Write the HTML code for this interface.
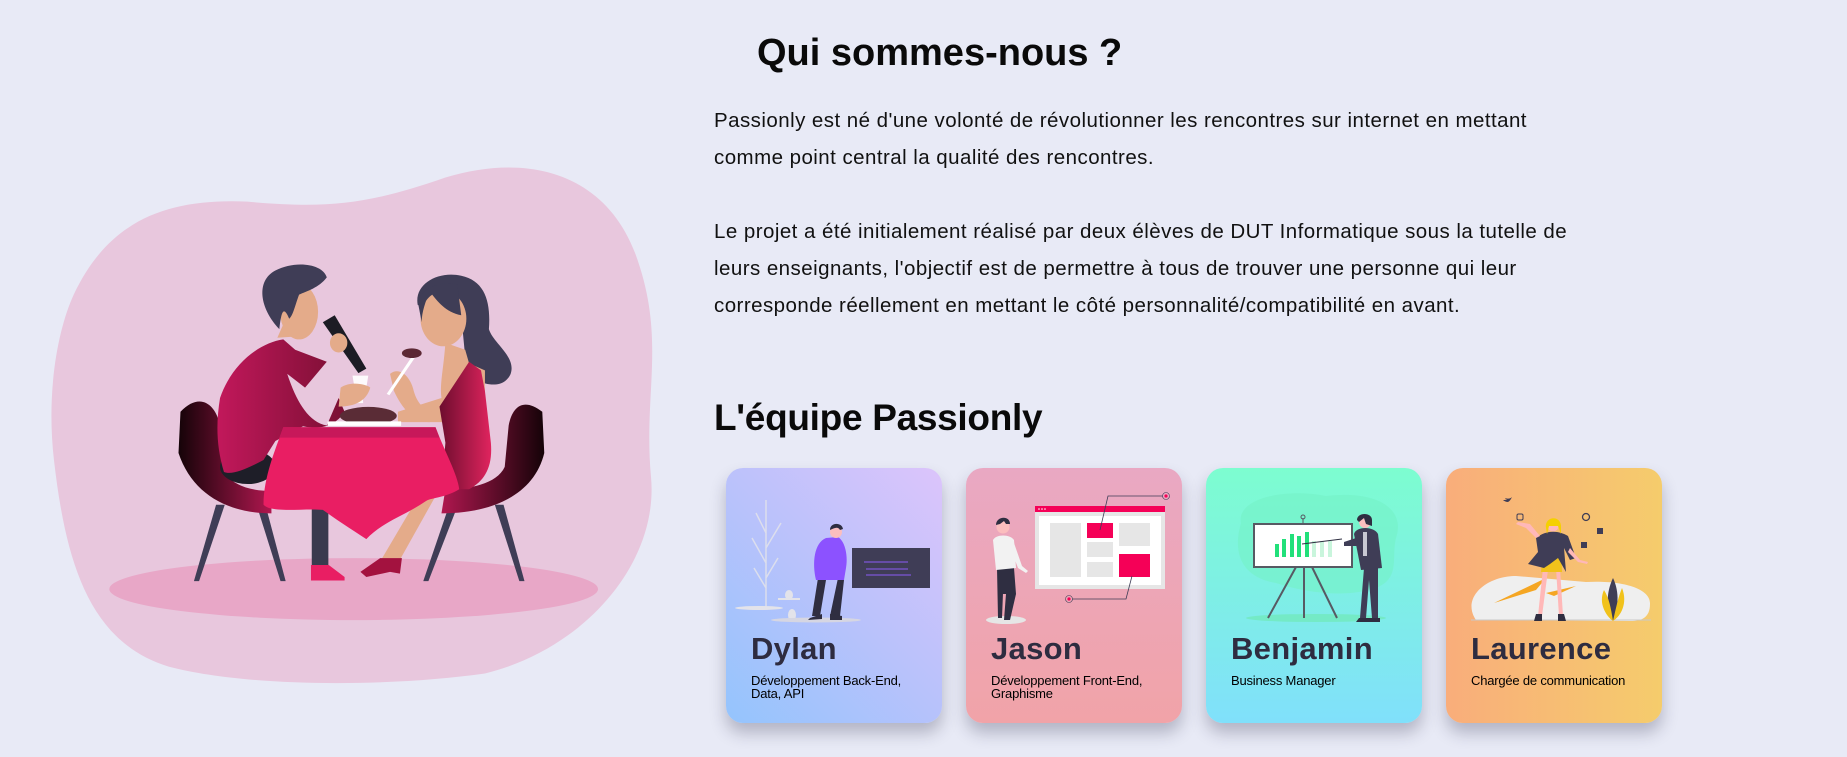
<!DOCTYPE html>
<html><head><meta charset="utf-8">
<style>
*{margin:0;padding:0;box-sizing:border-box}
html,body{width:1847px;height:757px;overflow:hidden;background:#e8eaf6;font-family:"Liberation Sans",sans-serif;position:relative}
.abs{position:absolute}
h1{position:absolute;left:757px;top:32px;font-size:38px;font-weight:bold;color:#0a0a0a;letter-spacing:0px;white-space:nowrap}
h2{position:absolute;left:714px;top:397px;font-size:37px;font-weight:bold;color:#0a0a0a;letter-spacing:-0.3px;white-space:nowrap}
.p{position:absolute;left:714px;font-size:20.5px;color:#111;line-height:37px;white-space:nowrap;letter-spacing:0.45px}
.card{position:absolute;top:468px;width:216px;height:255px;border-radius:17px;box-shadow:0 10px 16px rgba(40,40,70,.28);overflow:hidden}
.card svg{position:absolute;left:0;top:0}
.name{position:absolute;left:25px;top:163px;font-size:31px;font-weight:bold;color:#2e2c40;letter-spacing:0.3px}
.role{position:absolute;left:25px;top:206px;font-size:13px;line-height:13px;color:#000;letter-spacing:-0.2px}
</style></head><body>

<svg class="abs" style="left:50px;top:150px" width="620" height="540" viewBox="0 0 1568 1568" preserveAspectRatio="none">
<defs>
<linearGradient id="ch" x1="0" x2="1"><stop offset="0" stop-color="#150308"/><stop offset="1" stop-color="#b0174f"/></linearGradient>
<linearGradient id="ch2" x1="1" x2="0"><stop offset="0" stop-color="#150308"/><stop offset="1" stop-color="#b0174f"/></linearGradient>
<linearGradient id="sh" x1="0" x2="1"><stop offset="0" stop-color="#c2185b"/><stop offset="1" stop-color="#7a0f33"/></linearGradient>
<linearGradient id="dr" x1="0" x2="1"><stop offset="0" stop-color="#6d0d2e"/><stop offset="1" stop-color="#e0245e"/></linearGradient>
</defs>
<path d="M60 420 C150 200 300 140 500 150 C700 170 800 160 1000 80 C1200 10 1400 60 1480 300 C1560 550 1500 700 1520 950 C1540 1200 1350 1450 1100 1520 C850 1560 500 1560 300 1500 C100 1430 40 1200 10 900 C-10 700 20 520 60 420Z" fill="#e8c7dd"/>
<ellipse cx="768" cy="1275" rx="618" ry="90" fill="#e8a7c7"/>
<polygon points="420,1030 442,1030 377,1252 364,1252" fill="#3f3d56"/>
<polygon points="525,1040 547,1040 596,1252 583,1252" fill="#3f3d56"/>
<polygon points="1010,1030 1032,1030 957,1252 944,1252" fill="#3f3d56"/>
<polygon points="1125,1030 1147,1030 1200,1252 1187,1252" fill="#3f3d56"/>
<path d="M330 760 C380 700 420 740 430 800 L440 930 C460 980 520 990 560 990 L560 1055 C450 1055 360 1000 325 880 Z" fill="url(#ch)"/>
<path d="M1245 760 C1200 720 1170 740 1160 800 L1150 920 C1130 970 1060 985 1000 985 L990 1055 C1120 1055 1225 1000 1250 880 Z" fill="url(#ch2)"/>
<rect x="662" y="1030" width="42" height="180" fill="#3a3a4e"/>
<path d="M660 1205 L705 1205 L745 1240 L745 1250 L660 1250Z" fill="#e91e63"/>
<path d="M975 1005 L880 1200 L835 1195 L935 1000Z" fill="#e4ab8a"/>
<path d="M835 1185 L890 1185 L885 1230 L860 1225 L800 1240 L785 1225Z" fill="#a3123f"/>
<ellipse cx="500" cy="920" rx="70" ry="50" fill="#1e1e28"/>
<path d="M430 720 C460 620 530 560 590 550 L620 580 L700 615 L645 690 L600 650 C620 720 650 790 700 800 L730 720 L745 760 C720 805 680 812 640 802 L570 845 L540 900 C500 925 460 945 440 935 C420 860 420 790 430 720Z" fill="url(#sh)"/>
<path d="M575 545 L600 480 L640 540 Z" fill="#e4ab8a"/>
<ellipse cx="630" cy="470" rx="48" ry="80" fill="#e4ab8a"/>
<path d="M580 520 C530 460 520 380 570 350 C620 320 690 330 700 370 C680 400 650 410 630 420 C620 450 615 480 605 490 C590 450 585 470 580 520Z" fill="#3f3d56"/>
<path d="M690 500 L720 480 L800 635 L780 648Z" fill="#1c1c24"/>
<ellipse cx="730" cy="560" rx="22" ry="28" fill="#e4ab8a"/>
<path d="M765 655 L805 655 L800 690 L790 690 L792 735 L775 735 L780 690 L770 690Z" fill="#fff" opacity=".9"/>
<path d="M735 690 C760 670 800 680 810 690 C800 730 770 745 730 745Z" fill="#e4ab8a"/>
<path d="M930 450 C920 390 980 350 1040 365 C1100 380 1115 440 1110 520 C1120 560 1180 600 1165 650 C1150 690 1110 685 1080 670 L1050 600 L1040 480 Z" fill="#3f3d56"/>
<ellipse cx="995" cy="490" rx="58" ry="80" fill="#e4ab8a"/>
<path d="M930 440 C940 400 990 380 1030 390 L1040 480 C1000 470 980 440 960 410 C950 440 940 470 940 500Z" fill="#3f3d56"/>
<path d="M1000 560 L1050 580 L1060 620 L1100 640 L1100 700 L1010 790 L880 790 L880 760 L990 720 C985 680 995 640 1000 560Z" fill="#e4ab8a"/>
<path d="M860 650 C880 630 910 650 920 700 C930 740 950 760 980 760 L960 790 C920 790 890 750 870 700Z" fill="#e4ab8a"/>
<path d="M1060 615 L1090 640 L1100 700 L1115 850 C1120 920 1100 960 1060 985 L990 985 L1000 850 L985 745 Z" fill="url(#dr)"/>
<path d="M920 600 L855 710" stroke="#fff" stroke-width="8"/>
<ellipse cx="915" cy="590" rx="25" ry="14" fill="#5c2834"/>
<ellipse cx="805" cy="772" rx="72" ry="26" fill="#5a2c36"/>
<rect x="702" y="788" width="186" height="13" fill="#fff"/>
<path d="M590 805 L975 805 C1000 880 1030 940 1035 985 C1000 1010 960 1010 950 1020 C900 1060 840 1080 800 1130 C760 1100 720 1070 690 1045 C640 1040 560 1055 540 1030 C540 950 570 870 590 805Z" fill="#e91e63"/>
<path d="M590 805 L975 805 L985 835 L580 835Z" fill="#c7185a"/>
</svg>

<h1>Qui sommes-nous ?</h1>
<div class="p" style="top:102px">Passionly est né d'une volonté de révolutionner les rencontres sur internet en mettant<br>comme point central la qualité des rencontres.</div>
<div class="p" style="top:213px">Le projet a été initialement réalisé par deux élèves de DUT Informatique sous la tutelle de<br>leurs enseignants, l'objectif est de permettre à tous de trouver une personne qui leur<br>corresponde réellement en mettant le côté personnalité/compatibilité en avant.</div>
<h2>L'équipe Passionly</h2>

<div class="card" style="left:726px;background:linear-gradient(45deg,#94c4fd 0%,#b9c2fb 50%,#dcc4fb 100%)">
<svg width="216" height="255">
<g stroke="#e3e3ea" stroke-width="1.5" fill="none" opacity=".85"><path d="M40 32 L40 140 M40 95 L26 70 M40 80 L55 55 M40 110 L52 90 M40 65 L30 45 M40 120 L28 100"/></g>
<ellipse cx="33" cy="140" rx="24" ry="2" fill="#e3e3ea"/>
<rect x="52" y="130" width="22" height="2" fill="#e3e3ea"/><ellipse cx="63" cy="127" rx="4" ry="5" fill="#e3e3ea"/>
<ellipse cx="66" cy="147" rx="4" ry="6" fill="#e3e3ea"/>
<ellipse cx="90" cy="152" rx="45" ry="2.5" fill="#d6d6e2"/>
<rect x="126" y="80" width="78" height="40" fill="#3f3d56"/>
<g stroke="#8b5cf6" stroke-width="1"><path d="M138 94 L182 94 M140 101 L182 101 M140 107 L185 107"/></g>
<path d="M104 148 L112 110 L118 112 L114 148Z M86 148 L92 110 L100 112 L94 148Z" fill="#2f2e41"/>
<path d="M84 150 L96 146 L96 151 L82 152Z M104 146 L116 148 L116 152 L104 152Z" fill="#2f2e41"/>
<path d="M90 112 C86 95 88 75 100 70 L112 69 C120 74 122 90 120 100 L118 112Z" fill="#8c52ff"/>
<circle cx="110" cy="64" r="6" fill="#fbbebe"/>
<path d="M104 62 C104 54 116 54 117 61 L114 62 C112 58 108 60 104 62Z" fill="#2f2e41"/>
</svg>
<div class="name">Dylan</div>
<div class="role">Développement Back-End,<br>Data, API</div>
</div>

<div class="card" style="left:966px;background:linear-gradient(180deg,#e9a8c3 0%,#f1a3a8 100%)">
<svg width="216" height="255">
<rect x="69" y="38" width="130" height="83" fill="#e6e6e6"/>
<rect x="69" y="38" width="130" height="6" fill="#f50057"/>
<circle cx="73" cy="41" r=".8" fill="#fff"/><circle cx="76" cy="41" r=".8" fill="#fff"/><circle cx="79" cy="41" r=".8" fill="#fff"/>
<rect x="73" y="48" width="122" height="69" fill="#fff"/>
<rect x="84" y="55" width="31" height="54" fill="#e6e6e6"/>
<rect x="121" y="55" width="26" height="15" fill="#f50057"/>
<rect x="121" y="74" width="26" height="15" fill="#e6e6e6"/>
<rect x="121" y="94" width="26" height="15" fill="#e6e6e6"/>
<rect x="153" y="55" width="31" height="23" fill="#e6e6e6"/>
<rect x="153" y="86" width="31" height="23" fill="#f50057"/>
<path d="M134 62 L142 28 L197 28 M166 108 L160 131 L106 131" stroke="#3f3d56" stroke-width=".8" fill="none"/>
<circle cx="200" cy="28" r="3.5" fill="none" stroke="#3f3d56" stroke-width=".6"/><circle cx="200" cy="28" r="1.6" fill="#f50057"/>
<circle cx="103" cy="131" r="3.5" fill="none" stroke="#3f3d56" stroke-width=".6"/><circle cx="103" cy="131" r="1.6" fill="#f50057"/>
<ellipse cx="40" cy="152" rx="20" ry="4" fill="#e6e6e6"/>
<path d="M34 100 L48 100 L50 126 L44 152 L38 152 L40 126 L34 126Z M31 100 L38 100 L36 150 L32 150Z" fill="#2f2e41"/>
<path d="M27 72 C30 66 44 66 48 72 L50 100 L30 102 Z" fill="#f2f2f2"/>
<path d="M48 75 L56 98 L62 103 L60 105 L52 100 L46 84Z" fill="#f2f2f2"/>
<circle cx="37" cy="59" r="6.5" fill="#fbbebe"/>
<path d="M30 57 C30 48 44 47 44 56 L40 56 L38 53 L34 56Z" fill="#2f2e41"/>
</svg>
<div class="name">Jason</div>
<div class="role">Développement Front-End,<br>Graphisme</div>
</div>

<div class="card" style="left:1206px;background:linear-gradient(180deg,#7dfdd0 0%,#80e0fb 100%)">
<svg width="216" height="255">
<path d="M35 55 C30 30 80 20 120 28 C170 22 200 40 190 70 C185 90 195 110 170 120 C140 130 100 125 70 115 C40 110 25 90 35 55Z" fill="#74f2c6" opacity=".6"/>
<ellipse cx="110" cy="150" rx="70" ry="4" fill="#74eac6"/>
<path d="M90 99 L62 150 M98 99 L98 150 M106 99 L131 150" stroke="#575a63" stroke-width="2"/>
<path d="M97 55 L97 50" stroke="#575a63" stroke-width="1"/><circle cx="97" cy="49" r="2" fill="none" stroke="#575a63" stroke-width="1"/>
<rect x="48" y="56" width="98" height="43" fill="#fff" stroke="#575a63" stroke-width="2"/>
<rect x="69" y="76" width="4" height="13" fill="#22e07a"/>
<rect x="76" y="71" width="4" height="18" fill="#22e07a"/>
<rect x="84" y="66" width="4" height="23" fill="#22e07a"/>
<rect x="91" y="68" width="4" height="21" fill="#22e07a"/>
<rect x="99" y="64" width="4" height="25" fill="#22e07a"/>
<rect x="106" y="73" width="4" height="16" fill="#c9f5dc"/><rect x="114" y="73" width="4" height="16" fill="#c9f5dc"/><rect x="122" y="73" width="4" height="16" fill="#c9f5dc"/>
<path d="M96 76 L136 71" stroke="#2f2e41" stroke-width="1"/>
<path d="M158 100 L172 100 L172 150 L166 150 L163 112 L160 150 L154 150Z" fill="#3f3d56"/>
<path d="M148 66 C150 58 168 58 172 66 L176 100 L155 102Z" fill="#3f3d56"/>
<path d="M150 70 L138 74 L138 78 L154 78Z" fill="#3f3d56"/>
<rect x="157" y="64" width="4" height="24" fill="#c8c8d2"/>
<circle cx="159" cy="54" r="6" fill="#fbbebe"/>
<path d="M151 52 C151 44 166 44 166 52 L166 58 L160 56 L158 50 L153 54Z" fill="#2f2e41"/>
<path d="M153 150 L167 150 L167 154 L150 154Z M166 150 L174 150 L174 154 L166 154Z" fill="#2f2e41"/>
</svg>
<div class="name">Benjamin</div>
<div class="role">Business Manager</div>
</div>

<div class="card" style="left:1446px;background:linear-gradient(90deg,#f9ad7b 0%,#f5cc6c 100%)">
<svg width="216" height="255">
<path d="M30 152 C15 130 40 108 70 108 L140 114 C175 112 205 120 204 136 C204 150 195 153 185 153Z" fill="#efefef"/>
<path d="M25 152 L205 152" stroke="#c9c9c9" stroke-width="1"/>
<path d="M48 135 L100 110 L90 122 Z M100 125 L130 118 L108 128Z" fill="#f5a623"/>
<path d="M167 110 C160 125 160 140 167 153 C172 140 174 125 167 110Z" fill="#3f3d56"/>
<path d="M158 122 C152 135 160 148 167 153 C165 140 163 130 158 122Z M176 120 C182 135 175 148 167 153 C170 140 172 130 176 120Z" fill="#f1c21b"/>
<path d="M97 100 L92 148 L96 148 L102 102Z M110 100 L113 148 L117 148 L114 100Z" fill="#ffb8b8"/>
<path d="M90 146 L96 146 L96 153 L88 153Z M112 146 L118 146 L120 153 L112 153Z" fill="#2f2e41"/>
<path d="M98 72 L115 72 L116 104 L95 104Z" fill="#f1c21b"/>
<path d="M90 70 C100 62 112 62 122 68 L130 90 L124 92 L118 80 L120 104 L112 90 L104 96 L98 100 L82 96 L92 84Z" fill="#3f3d56"/>
<path d="M90 70 L80 60 L70 56 L72 54 L84 56 L94 68Z M124 80 L134 92 L142 94 L141 96 L132 94 L122 84Z" fill="#ffb8b8"/>
<circle cx="107" cy="58" r="5.5" fill="#ffb8b8"/>
<path d="M100 60 C98 48 116 46 115 60 L115 66 L112 58 L103 58 L101 66Z" fill="#f5d000"/>
<g fill="#3f3d56">
<path d="M59 30 C62 31 64 31 66 29 C65 31 64 33 62 34 C60 34 58 33 57 32 C59 32 60 32 61 31 C59 31 59 30 59 30Z"/>
<rect x="71" y="46" width="6" height="6" rx="1.5" fill="none" stroke="#3f3d56" stroke-width="1"/>
<circle cx="140" cy="49" r="3.5" fill="none" stroke="#3f3d56" stroke-width="1.3"/>
<rect x="151" y="60" width="6" height="6"/>
<rect x="135" y="74" width="6" height="6"/>
</g>
</svg>
<div class="name">Laurence</div>
<div class="role">Chargée de communication</div>
</div>
</body></html>
